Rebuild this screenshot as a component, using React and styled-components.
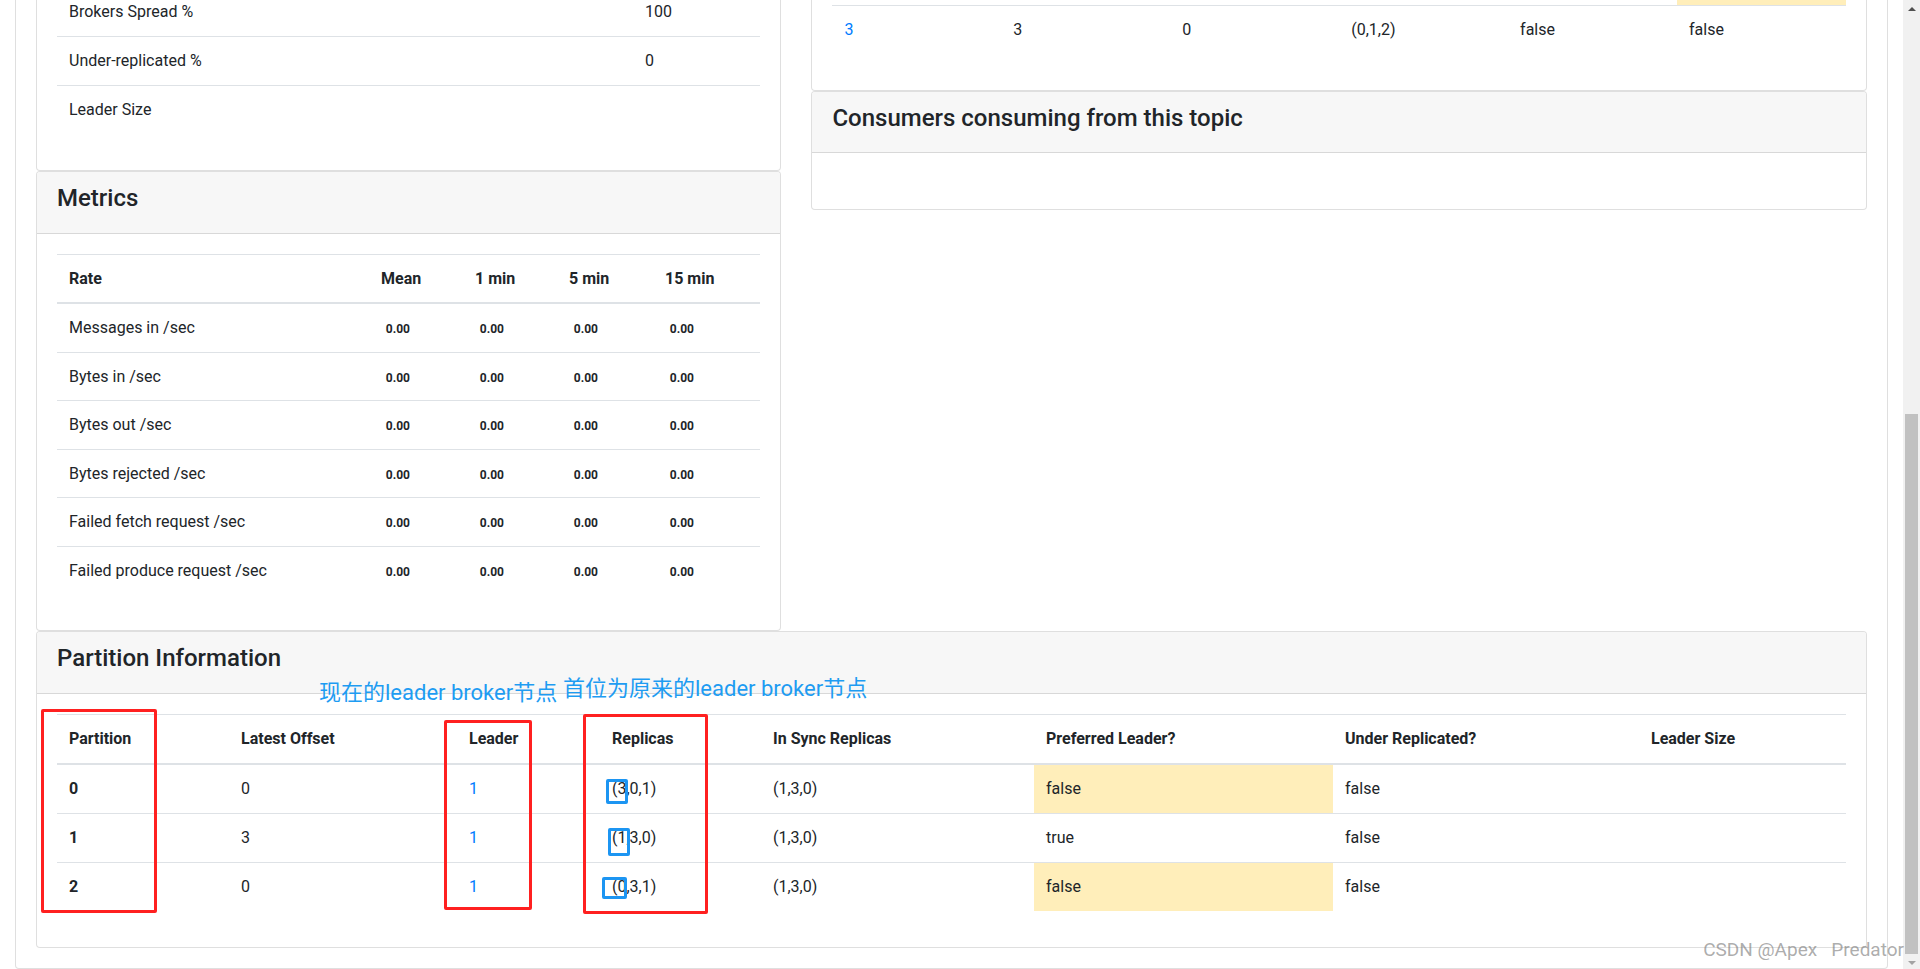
import React from 'react';
import styled, { createGlobalStyle } from 'styled-components';

const GlobalStyle = createGlobalStyle`
  *, *::before, *::after { box-sizing: border-box; }
  html, body {
    margin: 0;
    padding: 0;
    height: 969px;
    overflow: hidden;
    background: #fff;
  }
  body {
    font-family: Roboto, "Liberation Sans", "Noto Sans CJK SC", sans-serif;
    font-size: 16px;
    line-height: 1.5;
    color: #212529;
  }
`;

/* ---------- page frame ---------- */

const Page = styled.div`
  position: relative;
  display: flex;
  width: 1920px;
  height: 969px;
  overflow: hidden;
  background: #fff;
`;

const Viewport = styled.main`
  flex: 1 1 auto;
  min-width: 0;
  height: 100%;
  overflow: hidden;
`;

/* the page is scrolled: content starts above the visible area */
const ScrolledContent = styled.div`
  margin-top: ${(p) => -p.$scrollTop}px;
  padding: 0 15px;
`;

const OuterCard = styled.section`
  border: 1px solid rgba(0, 0, 0, 0.125);
  border-radius: 4px;
  padding: 20px;
  background: #fff;
`;

const Row = styled.div`
  display: flex;
  margin: 0 -15px;
`;

const Col = styled.div`
  flex: 0 0 ${(p) => (p.$span / 12) * 100}%;
  max-width: ${(p) => (p.$span / 12) * 100}%;
  padding: 0 15px;
  min-width: 0;
`;

/* ---------- cards ---------- */

const Card = styled.div`
  display: flex;
  flex-direction: column;
  background: #fff;
  border: 1px solid rgba(0, 0, 0, 0.125);
  border-radius: 4px;
`;

const CardHeader = styled.div`
  padding: 12px 20px;
  background: #f7f7f7;
  border-bottom: 1px solid rgba(0, 0, 0, 0.125);
  border-radius: 3px 3px 0 0;
`;

const CardTitle = styled.h4`
  margin: 0 0 8px;
  font-size: 24px;
  font-weight: 500;
  line-height: 1.2;
  color: #212529;
`;

const CardBody = styled.div`
  flex: 1 1 auto;
  padding: 20px;
`;

/* ---------- tables ---------- */

const Table = styled.table`
  width: 100%;
  margin-bottom: 16px;
  border-collapse: collapse;
  table-layout: ${(p) => (p.$fixed ? 'fixed' : 'auto')};
  color: #212529;
`;

const ColSpec = styled.col`
  width: ${(p) => (p.$w ? `${p.$w}px` : 'auto')};
`;

const Th = styled.th`
  padding: ${(p) => (p.$compact ? '11.75px 12px' : '12px')};
  text-align: left;
  vertical-align: bottom;
  font-weight: 700;
  border-top: 1px solid #dee2e6;
  border-bottom: 2px solid #dee2e6;
`;

const Td = styled.td`
  padding: ${(p) => (p.$compact ? '11.75px 12px' : '12px')};
  vertical-align: top;
  border-top: 1px solid #dee2e6;
  font-weight: ${(p) => (p.$bold ? 700 : 400)};
  background: ${(p) => (p.$warning ? '#ffeeba' : 'transparent')};
`;

const Link = styled.a`
  color: #007bff;
  text-decoration: none;
`;

const Badge = styled.span`
  display: inline-block;
  padding: 0.25em 0.4em;
  font-size: 75%;
  font-weight: 700;
  line-height: 1;
  vertical-align: baseline;
  border-radius: 4px;
`;

const Toolbar = styled.div`
  display: flex;
  gap: 8px;
  height: 39.5px;
`;

const Button = styled.button`
  font: inherit;
  padding: 6px 12px;
  border: 1px solid #007bff;
  border-radius: 4px;
  background: #007bff;
  color: #fff;
  line-height: 1.5;
`;

/* ---------- scrollbar ---------- */

const Scrollbar = styled.div`
  flex: 0 0 17px;
  display: flex;
  flex-direction: column;
  background: #f1f1f1;
`;

const ArrowButton = styled.div`
  flex: 0 0 17px;
  display: flex;
  align-items: center;
  justify-content: center;
  &::before {
    content: '';
    width: 0;
    height: 0;
    border-left: 4px solid transparent;
    border-right: 4px solid transparent;
    ${(p) =>
      p.$dir === 'up'
        ? 'border-bottom: 4px solid #505050;'
        : 'border-top: 4px solid #a3a3a3;'}
  }
`;

const Track = styled.div`
  flex: 1 1 auto;
  display: flex;
  flex-direction: column;
`;

const Thumb = styled.div`
  margin: ${(p) => p.$top}px 2px 0;
  height: ${(p) => p.$height}px;
  background: #c1c1c1;
`;

/* ---------- overlays (screenshot annotations) ---------- */

const OverlayLayer = styled.div`
  position: absolute;
  inset: 0;
  pointer-events: none;
`;

const MarkBox = styled.div`
  position: absolute;
  left: ${(p) => p.$x}px;
  top: ${(p) => p.$y}px;
  width: ${(p) => p.$w}px;
  height: ${(p) => p.$h}px;
  border: 3px solid ${(p) => (p.$tone === 'blue' ? '#1c95f2' : '#ff2020')};
  border-radius: 2px;
`;

const Note = styled.div`
  position: absolute;
  left: ${(p) => p.$x}px;
  top: ${(p) => p.$y}px;
  font-family: Roboto, "Noto Sans CJK SC", sans-serif;
  font-size: 22px;
  line-height: 22px;
  color: #1e9cf2;
  white-space: nowrap;
`;

const Watermark = styled.div`
  position: absolute;
  right: 16px;
  top: 938px;
  font-family: Roboto, "Liberation Sans", sans-serif;
  font-size: 19px;
  line-height: 24px;
  color: rgba(120, 120, 120, 0.62);
  white-space: pre;
`;

/* ---------- data ---------- */

const summaryRows = [
  ['Brokers Spread %', '100'],
  ['Under-replicated %', '0'],
  ['Leader Size', ''],
];

const brokerRows = [
  { broker: '1', count: '3', leader: '3', parts: '(0,1,2)', skewed: 'false', leaderSkewed: 'true', warn: true },
  { broker: '3', count: '3', leader: '0', parts: '(0,1,2)', skewed: 'false', leaderSkewed: 'false' },
];

const metricRows = [
  'Messages in /sec',
  'Bytes in /sec',
  'Bytes out /sec',
  'Bytes rejected /sec',
  'Failed fetch request /sec',
  'Failed produce request /sec',
];

const partitionRows = [
  { id: '0', offset: '0', leader: '1', replicas: '(3,0,1)', isr: '(1,3,0)', preferred: 'false', under: 'false' },
  { id: '1', offset: '3', leader: '1', replicas: '(1,3,0)', isr: '(1,3,0)', preferred: 'true', under: 'false' },
  { id: '2', offset: '0', leader: '1', replicas: '(0,3,1)', isr: '(1,3,0)', preferred: 'false', under: 'false' },
];

/* ---------- sections ---------- */

function TopicActions() {
  return (
    <Card>
      <CardBody>
        <Toolbar>
          <Button type="button">Delete Topic</Button>
          <Button type="button">Reassign Partitions</Button>
        </Toolbar>
      </CardBody>
    </Card>
  );
}

function TopicSummary() {
  return (
    <Card>
      <CardHeader>
        <CardTitle>Topic Summary</CardTitle>
      </CardHeader>
      <CardBody>
        <Table $fixed>
          <colgroup>
            <ColSpec $w={576} />
            <ColSpec />
          </colgroup>
          <tbody>
            {summaryRows.map(([label, value]) => (
              <tr key={label}>
                <Td>{label}</Td>
                <Td>{value}</Td>
              </tr>
            ))}
          </tbody>
        </Table>
      </CardBody>
    </Card>
  );
}

function Metrics() {
  return (
    <Card>
      <CardHeader>
        <CardTitle>Metrics</CardTitle>
      </CardHeader>
      <CardBody>
        <Table $fixed>
          <colgroup>
            <ColSpec $w={312} />
            <ColSpec $w={94} />
            <ColSpec $w={94} />
            <ColSpec $w={96} />
            <ColSpec />
          </colgroup>
          <thead>
            <tr>
              <Th $compact>Rate</Th>
              <Th $compact>Mean</Th>
              <Th $compact>1 min</Th>
              <Th $compact>5 min</Th>
              <Th $compact>15 min</Th>
            </tr>
          </thead>
          <tbody>
            {metricRows.map((label) => (
              <tr key={label}>
                <Td $compact>{label}</Td>
                <Td $compact><Badge>0.00</Badge></Td>
                <Td $compact><Badge>0.00</Badge></Td>
                <Td $compact><Badge>0.00</Badge></Td>
                <Td $compact><Badge>0.00</Badge></Td>
              </tr>
            ))}
          </tbody>
        </Table>
      </CardBody>
    </Card>
  );
}

function PartitionsByBroker() {
  return (
    <Card>
      <CardHeader>
        <CardTitle>Partitions by Broker</CardTitle>
      </CardHeader>
      <CardBody>
        <Table $fixed>
          <thead>
            <tr>
              <Th>Broker</Th>
              <Th># of Partitions</Th>
              <Th># as Leader</Th>
              <Th>Partitions</Th>
              <Th>Skewed?</Th>
              <Th>Leader Skewed?</Th>
            </tr>
          </thead>
          <tbody>
            {brokerRows.map((r) => (
              <tr key={r.broker}>
                <Td><Link href="#">{r.broker}</Link></Td>
                <Td>{r.count}</Td>
                <Td>{r.leader}</Td>
                <Td>{r.parts}</Td>
                <Td>{r.skewed}</Td>
                <Td $warning={r.warn}>{r.leaderSkewed}</Td>
              </tr>
            ))}
          </tbody>
        </Table>
      </CardBody>
    </Card>
  );
}

function Consumers() {
  return (
    <Card>
      <CardHeader>
        <CardTitle>Consumers consuming from this topic</CardTitle>
      </CardHeader>
      <CardBody>
        <Table>
          <tbody />
        </Table>
      </CardBody>
    </Card>
  );
}

function PartitionInformation() {
  return (
    <Card>
      <CardHeader>
        <CardTitle>Partition Information</CardTitle>
      </CardHeader>
      <CardBody>
        <Table $fixed>
          <colgroup>
            <ColSpec $w={172} />
            <ColSpec $w={228} />
            <ColSpec $w={143} />
            <ColSpec $w={161} />
            <ColSpec $w={273} />
            <ColSpec $w={299} />
            <ColSpec $w={306} />
            <ColSpec />
          </colgroup>
          <thead>
            <tr>
              <Th>Partition</Th>
              <Th>Latest Offset</Th>
              <Th>Leader</Th>
              <Th>Replicas</Th>
              <Th>In Sync Replicas</Th>
              <Th>Preferred Leader?</Th>
              <Th>Under Replicated?</Th>
              <Th>Leader Size</Th>
            </tr>
          </thead>
          <tbody>
            {partitionRows.map((r) => (
              <tr key={r.id}>
                <Td $bold>{r.id}</Td>
                <Td>{r.offset}</Td>
                <Td><Link href="#">{r.leader}</Link></Td>
                <Td>{r.replicas}</Td>
                <Td>{r.isr}</Td>
                <Td $warning={r.preferred === 'false'}>{r.preferred}</Td>
                <Td>{r.under}</Td>
                <Td />
              </tr>
            ))}
          </tbody>
        </Table>
      </CardBody>
    </Card>
  );
}

export default function App() {
  return (
    <>
      <GlobalStyle />
      <Page>
        <Viewport>
          <ScrolledContent $scrollTop={198.3}>
            <OuterCard>
              <Row>
                <Col $span={5}>
                  <TopicActions />
                  <TopicSummary />
                  <Metrics />
                </Col>
                <Col $span={7}>
                  <PartitionsByBroker />
                  <Consumers />
                </Col>
              </Row>
              <PartitionInformation />
            </OuterCard>
          </ScrolledContent>
        </Viewport>
        <Scrollbar>
          <ArrowButton $dir="up" />
          <Track>
            <Thumb $top={397} $height={540} />
          </Track>
          <ArrowButton $dir="down" />
        </Scrollbar>
        <OverlayLayer>
          <Note $x={319} $y={682}>现在的leader broker节点</Note>
          <Note $x={563} $y={678}>首位为原来的leader broker节点</Note>
          <MarkBox $x={41} $y={709} $w={116} $h={204} />
          <MarkBox $x={444} $y={720} $w={88} $h={190} />
          <MarkBox $x={583} $y={714} $w={125} $h={200} />
          <MarkBox $tone="blue" $x={606} $y={779} $w={22} $h={25} />
          <MarkBox $tone="blue" $x={608} $y={828} $w={22} $h={28} />
          <MarkBox $tone="blue" $x={602} $y={877} $w={25} $h={22} />
          <Watermark>CSDN @Apex   Predator</Watermark>
        </OverlayLayer>
      </Page>
    </>
  );
}
